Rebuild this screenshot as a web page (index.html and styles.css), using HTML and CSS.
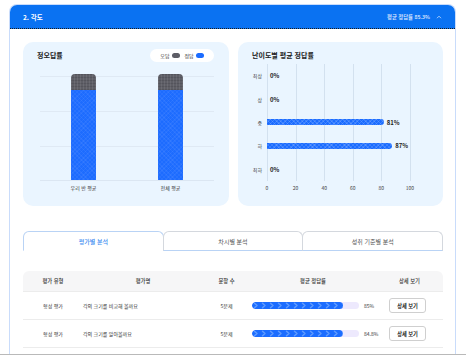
FILE: index.html
```html
<!DOCTYPE html>
<html lang="ko">
<head>
<meta charset="utf-8">
<title>2. 각도</title>
<link rel="stylesheet" href="styles.css">
</head>
<body>
<svg class="defs" width="0" height="0" aria-hidden="true">
  <defs>
    <pattern id="chevron" width="8" height="7" patternUnits="userSpaceOnUse">
      <polyline points="2.5,1.2 5,3.5 2.5,5.8" fill="none" stroke="#5f9bff" stroke-width="1.4" stroke-linecap="round" stroke-linejoin="round"/>
    </pattern>
  </defs>
</svg>
<div class="page">
  <section class="card">
    <header class="card-head">
      <span class="card-title">2. 각도</span>
      <span class="card-meta">평균 정답률 85.3%
        <svg class="chev" width="6" height="4" viewBox="0 0 6 4"><polyline points="1,3.2 3,1.2 5,3.2" fill="none" stroke="#cfe3ff" stroke-width="0.8"/></svg>
      </span>
    </header>
    <div class="card-body">
      <div class="charts">
        <div class="chart chart-ox">
          <div class="chart-top">
            <h3 class="chart-title">정오답률</h3>
            <div class="legend">
              <span>오답</span><i class="dot dot-wrong"></i>
              <span>정답</span><i class="dot dot-right"></i>
            </div>
          </div>
          <div class="ox-plot">
            <div class="ox-col">
              <div class="stack">
                <div class="seg seg-wrong" style="height:15%"></div>
                <div class="seg seg-right" style="height:85%"></div>
              </div>
            </div>
            <div class="ox-col">
              <div class="stack">
                <div class="seg seg-wrong" style="height:15%"></div>
                <div class="seg seg-right" style="height:85%"></div>
              </div>
            </div>
          </div>
          <div class="ox-labels"><span>우리 반 평균</span><span>전체 평균</span></div>
        </div>

        <div class="chart chart-level">
          <h3 class="chart-title">난이도별 평균 정답률</h3>
          <div class="lv-body">
            <div class="lv-row"><span class="lv-label">최상</span><div class="lv-track"><span class="lv-val">0%</span></div></div>
            <div class="lv-row"><span class="lv-label">상</span><div class="lv-track"><span class="lv-val">0%</span></div></div>
            <div class="lv-row"><span class="lv-label">중</span><div class="lv-track"><i class="lv-bar" style="width:81%"></i><span class="lv-val">81%</span></div></div>
            <div class="lv-row"><span class="lv-label">하</span><div class="lv-track"><i class="lv-bar" style="width:87%"></i><span class="lv-val">87%</span></div></div>
            <div class="lv-row"><span class="lv-label">최하</span><div class="lv-track"><span class="lv-val">0%</span></div></div>
          </div>
          <div class="lv-ticks"><span>0</span><span>20</span><span>40</span><span>60</span><span>80</span><span>100</span></div>
        </div>
      </div>

      <nav class="tabs">
        <button class="tab tab-active">평가별 분석</button>
        <button class="tab">차시별 분석</button>
        <button class="tab">성취 기준별 분석</button>
      </nav>

      <div class="table">
        <div class="tr th">
          <span>평가 유형</span>
          <span>평가명</span>
          <span>문항 수</span>
          <span>평균 정답률</span>
          <span>상세 보기</span>
        </div>
        <div class="tr">
          <span class="c1">형성 평가</span>
          <span class="c2">각의 크기를 비교해 볼까요</span>
          <span class="c3">5문제</span>
          <span class="c4">
            <i class="prog"><svg class="prog-fill" style="width:85%" height="7"><rect width="100%" height="7" rx="3.5" fill="#1c6dff"/><rect width="100%" height="7" rx="3.5" fill="url(#chevron)"/></svg></i>
            <em class="pct">85%</em>
          </span>
          <span class="c5"><button class="btn">상세 보기</button></span>
        </div>
        <div class="tr">
          <span class="c1">형성 평가</span>
          <span class="c2">각의 크기를 알아볼까요</span>
          <span class="c3">5문제</span>
          <span class="c4">
            <i class="prog"><svg class="prog-fill" style="width:84.8%" height="7"><rect width="100%" height="7" rx="3.5" fill="#1c6dff"/><rect width="100%" height="7" rx="3.5" fill="url(#chevron)"/></svg></i>
            <em class="pct">84.8%</em>
          </span>
          <span class="c5"><button class="btn">상세 보기</button></span>
        </div>
      </div>
    </div>
  </section>
</div>
</body>
</html>
```
FILE: styles.css
```css
* { box-sizing: border-box; margin: 0; padding: 0; }
html, body { background: #ffffff; }
body {
  font-family: "Noto Sans CJK KR", "Noto Sans", sans-serif;
  color: #222;
  width: 466px;
  height: 355px;
  overflow: hidden;
}
.defs { position: absolute; width: 0; height: 0; }
.page {
  padding: 4px 10px 0 9px;
  height: 355px;
  border-bottom: 1px solid #b9b9b9;
  display: flex;
  flex-direction: column;
}
.card {
  flex: 1;
  border: 1px solid #c9dcfb;
  border-bottom: none;
  border-radius: 8px 8px 0 0;
  overflow: hidden;
  background: #fff;
}
.card-head {
  height: 24px;
  background: #0a72f2;
  border-bottom: 1px dotted #1a1a1a;
  display: flex;
  align-items: center;
  justify-content: space-between;
  padding: 0 13px 0 13px;
  color: #fff;
}
.card-title { font-size: 6.5px; font-weight: 700; }
.card-meta { font-size: 5.3px; font-weight: 500; display: flex; align-items: center; gap: 6px; color: #e6f0ff; }
.chev { display: block; }

.card-body { padding: 13px 12px 0 13px; }
.charts { display: grid; grid-template-columns: 206px 205px; gap: 9px; }
.chart {
  background: #eaf5ff;
  border-radius: 10px;
  height: 164px;
}
.chart-title { font-size: 7px; font-weight: 700; color: #222; line-height: 13px; }

/* left chart */
.chart-ox { padding: 7px 15px 0 17px; }
.chart-top { display: flex; justify-content: space-between; align-items: center; height: 13px; }
.chart-ox .chart-title { margin-left: -3px; }
.legend {
  width: 64px; height: 13px;
  background: #fff; border-radius: 7px;
  display: flex; align-items: center; justify-content: center; gap: 2px;
  font-size: 5px; color: #333;
}
.legend span + .dot { margin-right: 3px; }
.dot { display: block; width: 8px; height: 5px; border-radius: 3px; }
.dot-wrong { background: #5d5d66; }
.dot-right { background: #1b6cff; margin-right: 0 !important; }

.ox-plot {
  margin-top: 14px;
  height: 105px;
  display: flex;
  border-bottom: 1px solid #dbe6f2;
  background:
    linear-gradient(#dfe9f4, #dfe9f4) 0 0 / 100% 1px no-repeat,
    linear-gradient(#dfe9f4, #dfe9f4) 0 35px / 100% 1px no-repeat,
    linear-gradient(#dfe9f4, #dfe9f4) 0 70px / 100% 1px no-repeat;
}
.ox-col { flex: 1; display: flex; justify-content: center; align-items: flex-end; }
.ox-col:first-child { padding-right: 1px; }
.stack { width: 25px; height: 106px; display: flex; flex-direction: column; }
.seg-wrong {
  border-radius: 4px 4px 0 0;
  background-color: #5e5e66;
  background-image:
    repeating-linear-gradient(90deg, rgba(255,255,255,0.08) 0 1px, transparent 1px 3px),
    repeating-linear-gradient(0deg, rgba(0,0,0,0.10) 0 1px, transparent 1px 3px);
}
.seg-right {
  background-color: #1d6cff;
  background-image:
    repeating-linear-gradient(45deg, rgba(255,255,255,0.05) 0 1px, transparent 1px 3px),
    repeating-linear-gradient(-45deg, rgba(255,255,255,0.05) 0 1px, transparent 1px 3px);
}
.ox-labels { display: flex; margin-top: 3px; font-size: 5px; color: #333; }
.ox-labels span { flex: 1; text-align: center; }

/* right chart */
.chart-level { padding: 7px 14px 0 14px; }
.lv-body { margin-top: 2px; }
.lv-row { display: flex; height: 23.4px; align-items: center; }
.lv-label { width: 15px; padding-right: 5px; text-align: right; font-size: 5px; color: #444; flex: none; }
.lv-track {
  flex: none;
  width: 144px;
  height: 100%;
  display: flex;
  align-items: center;
  background: repeating-linear-gradient(90deg, #d3e1ef 0 1px, transparent 1px 28.6px);
}
.lv-bar {
  display: block;
  height: 6px;
  border-radius: 0 3px 3px 0;
  background-color: #1b6cff;
  background-image:
    repeating-linear-gradient(45deg, rgba(255,255,255,0.14) 0 1px, transparent 1px 3px),
    repeating-linear-gradient(-45deg, rgba(255,255,255,0.14) 0 1px, transparent 1px 3px);
}
.lv-val { font-size: 6px; font-weight: 700; color: #222; margin-left: 3px; }
.lv-ticks {
  margin: 3px 0 0 15px;
  width: 143px;
  display: flex;
  justify-content: space-between;
  font-size: 5px;
  color: #444;
}
.lv-ticks span { width: 0; display: flex; justify-content: center; white-space: nowrap; }

/* tabs */
.tabs { display: flex; margin-top: 25px; height: 20px; }
.tab {
  flex: 1;
  font-family: inherit;
  font-size: 6px;
  color: #555;
  background: #fff;
  border: 1px solid #d4d8de;
  border-bottom: 1px solid #b9d3f5;
  border-radius: 6px 6px 0 0;
  cursor: pointer;
}
.tab + .tab { margin-left: -1px; }
.tab-active {
  color: #3b8cf0;
  font-weight: 500;
  border-color: #b9d3f5;
  border-bottom-color: transparent;
}

/* table */
.table { margin-top: 20px; font-size: 5px; color: #333; }
.tr {
  display: grid;
  grid-template-columns: 60px 120px 47px 126px 67px;
  height: 28px;
  align-items: center;
  border-bottom: 1px solid #ececec;
}
.tr > span { text-align: center; }
.tr > .c2 { text-align: left; }
.th {
  height: 21px;
  background: #f6f6f7;
  border-radius: 6px 6px 0 0;
  font-weight: 500;
  color: #333;
  font-size: 5.3px;
}
.th > span { display: block; text-align: center; }
.c4 { display: flex; align-items: center; gap: 5px; padding-left: 2px; }
.prog {
  display: block;
  width: 107px;
  height: 7px;
  border-radius: 4px;
  background: #ede9fd;
  overflow: hidden;
  flex: none;
}
.prog-fill { display: block; height: 7px; }
.pct { font-style: normal; font-size: 5px; color: #333; }
.c5 { display: flex; justify-content: center; }
.btn {
  font-family: inherit;
  font-size: 5.2px;
  font-weight: 700;
  color: #222;
  width: 37px;
  height: 15px;
  background: #fff;
  border: 1px solid #cfcfcf;
  border-radius: 3px;
  margin-left: -4px;
}
```
